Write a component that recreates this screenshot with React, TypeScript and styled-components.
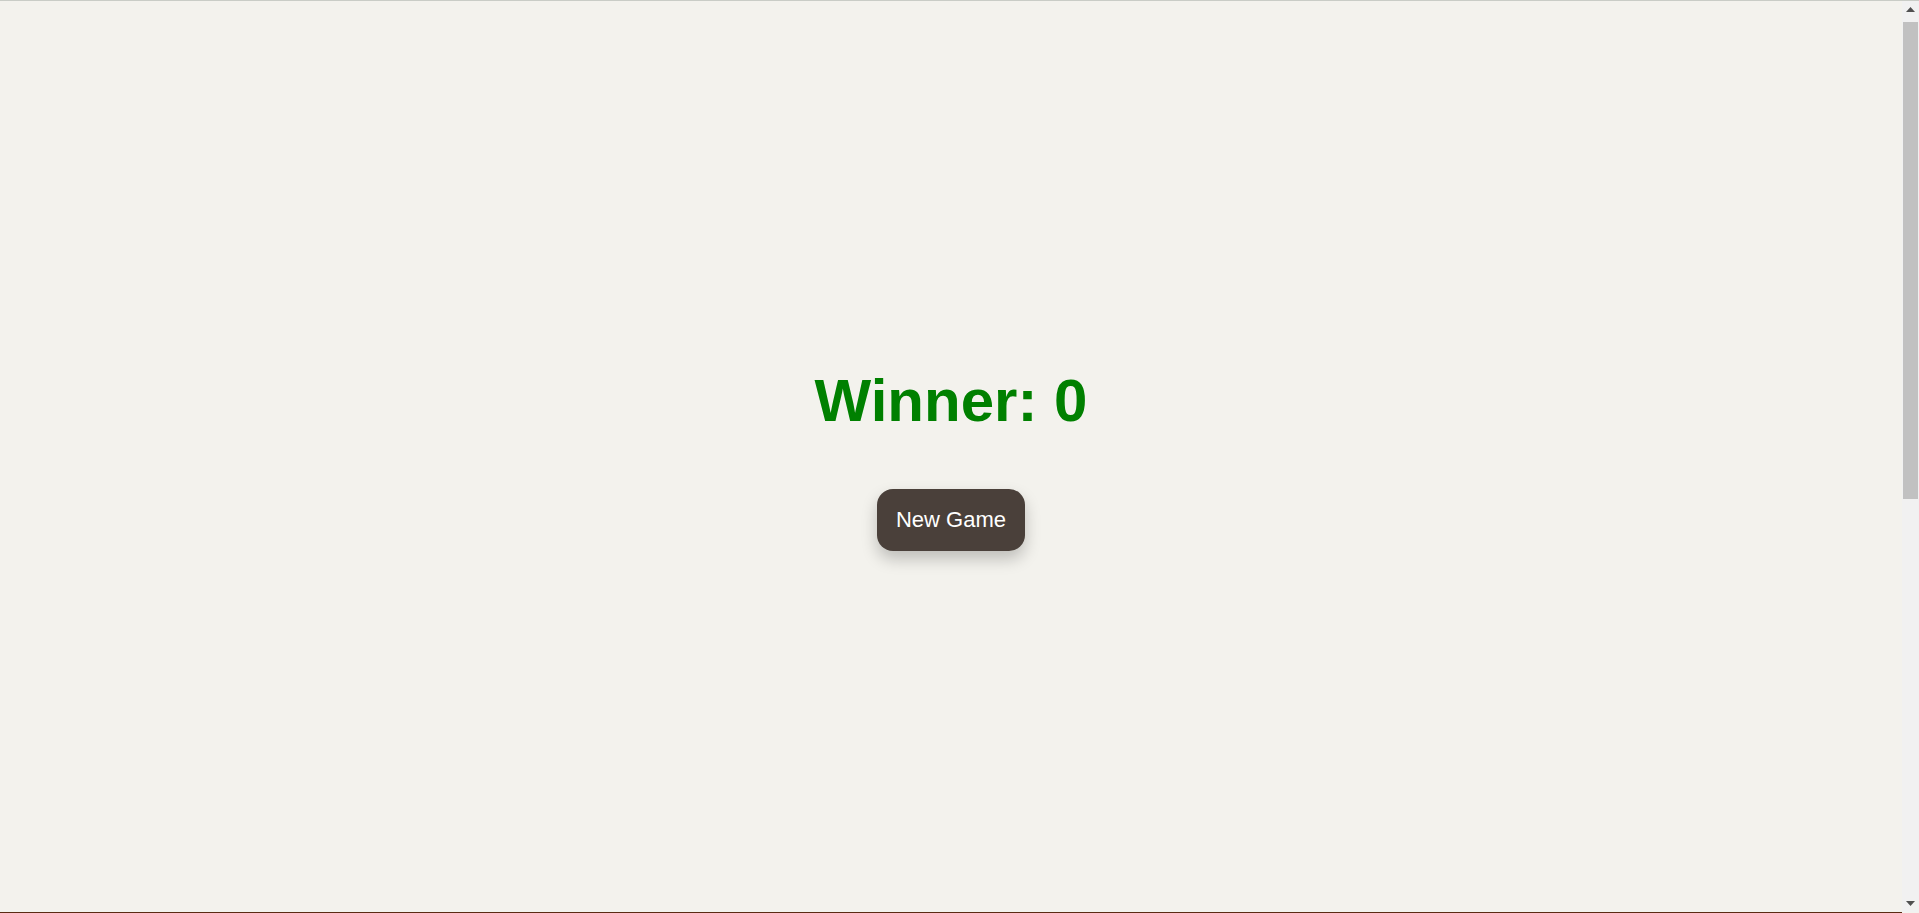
import React from "react";
import styled, { createGlobalStyle } from "styled-components";

const Global = createGlobalStyle`
  html, body { margin: 0; padding: 0; }
  body {
    background: #f3f2ed;
    font-family: "Liberation Sans", Arial, sans-serif;
    border-top: 1px solid #c9ccc6;
    padding-right: 17px;
  }
`;

const Stage = styled.main`
  height: calc(100vh - 2px);
  box-sizing: border-box;
  padding-top: 4px;
  display: flex;
  flex-direction: column;
  align-items: center;
  justify-content: center;
  gap: 54px;
`;

const Title = styled.h1`
  margin: 0;
  color: #008000;
  font-size: 60px;
  font-weight: 700;
  line-height: normal;
`;

const Button = styled.button`
  font-family: "Liberation Sans", Arial, sans-serif;
  font-size: 22px;
  color: #ffffff;
  background: #4a403a;
  border: none;
  border-radius: 16px;
  padding: 18px 19px;
  line-height: 26px;
  box-shadow: 0 8px 16px rgba(0, 0, 0, 0.22);
  cursor: pointer;
`;

const Footer = styled.footer`
  height: 780px;
  background: #f3f2ed;
  border-top: 1px solid #5a2a12;
`;

const ScrollRail = styled.div`
  position: fixed;
  top: 1px;
  right: 0;
  width: 17px;
  height: calc(100vh - 2px);
  background: #f1f1f1;
  display: flex;
  flex-direction: column;
`;

const ArrowBox = styled.div`
  height: 17px;
  display: flex;
  align-items: center;
  justify-content: center;
  flex: none;
`;

const Track = styled.div`
  flex: 1;
  padding: 4px 1px 0 1px;
`;

const Thumb = styled.div`
  height: 477px;
  background: #c1c1c1;
`;

const Arrow = ({ down }: { down?: boolean }) => (
  <svg width="9" height="5" viewBox="0 0 9 5">
    <polygon points={down ? "0,0 9,0 4.5,5" : "4.5,0 9,5 0,5"} fill="#505050" />
  </svg>
);

export default function App() {
  return (
    <>
      <Global />
      <Stage>
        <Title>Winner: 0</Title>
        <Button>New Game</Button>
      </Stage>
      <Footer />
      <ScrollRail>
        <ArrowBox>
          <Arrow />
        </ArrowBox>
        <Track>
          <Thumb />
        </Track>
        <ArrowBox>
          <Arrow down />
        </ArrowBox>
      </ScrollRail>
    </>
  );
}
